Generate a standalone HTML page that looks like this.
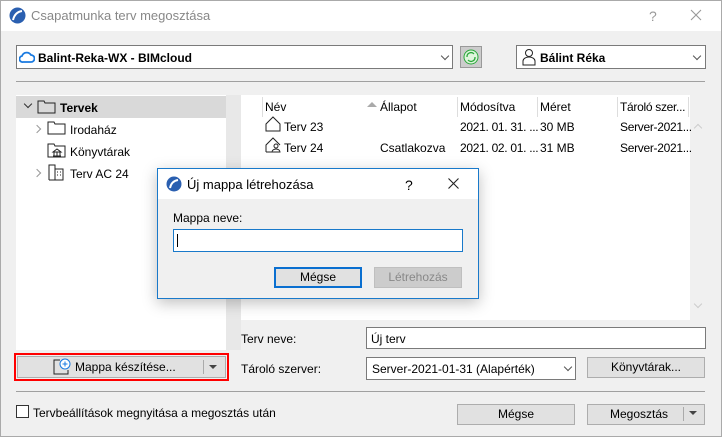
<!DOCTYPE html>
<html><head><meta charset="utf-8"><style>
*{box-sizing:border-box;margin:0;padding:0}
body{width:722px;height:437px;overflow:hidden;font-family:"Liberation Sans",sans-serif;font-size:12px;color:#000;background:#f0f0f0;position:relative}
.a{position:absolute}
.win{left:0;top:0;width:722px;height:437px;border:1px solid #aaa}
.btn{position:absolute;background:#e1e1e1;border:1px solid #adadad;text-align:center;line-height:18px}
.inp{position:absolute;background:#fff;border:1px solid #7a7a7a}
.sep{position:absolute;height:1px;background:#a0a0a0}
.chev{position:absolute;width:6px;height:6px;border-right:1px solid #555;border-bottom:1px solid #555;transform:rotate(45deg)}
.ls{letter-spacing:-0.3px}
</style></head><body>
<div class="a win"></div>
<div class="a" style="left:1px;top:1px;width:720px;height:30px;background:#fff"></div>
<svg class="a" style="left:9px;top:7px" width="17" height="17"><circle cx="8.5" cy="8.5" r="8" fill="#2a5fb0"/><path d="M4 13 Q6 5 13 4" stroke="#fff" stroke-width="2" fill="none"/></svg>
<div class="a" style="left:31px;top:8px;font-size:13px;color:#888">Csapatmunka terv megosztása</div>
<div class="a" style="left:649px;top:8px;font-size:14px;color:#999">?</div>
<svg class="a" style="left:690px;top:9px" width="12" height="12"><path d="M1 1L11 11M11 1L1 11" stroke="#999" stroke-width="1.1"/></svg>

<div class="inp" style="left:16px;top:45px;width:437px;height:24px"></div>
<svg class="a" style="left:19px;top:50px" width="16" height="14"><path d="M4 12 H12 A3.5 3.5 0 0 0 12 5 A5 5 0 0 0 3 6 A3 3 0 0 0 4 12" stroke="#1a7ae0" stroke-width="1.8" fill="none"/></svg>
<div class="a" style="left:38px;top:51px;font-weight:bold">Balint-Reka-WX - BIMcloud</div>
<div class="chev" style="left:442px;top:53px"></div>
<div class="a" style="left:460px;top:46px;width:22px;height:22px;background:#ccc;border:1px solid #999"></div>
<svg class="a" style="left:463px;top:49px" width="16" height="16"><circle cx="8" cy="8" r="7" fill="#dff5dc" stroke="#2aa83a"/><path d="M4 8 A4 4 0 0 1 11 5 M12 8 A4 4 0 0 1 5 11" stroke="#2aa83a" stroke-width="1.3" fill="none"/></svg>
<div class="inp" style="left:516px;top:45px;width:190px;height:24px"></div>
<svg class="a" style="left:522px;top:48px" width="14" height="18"><circle cx="7" cy="5" r="3.5" stroke="#222" fill="none"/><path d="M1 17 V13 A6 4 0 0 1 13 13 V17 Z" stroke="#222" fill="none"/></svg>
<div class="a" style="left:540px;top:51px;font-weight:bold">Bálint Réka</div>
<div class="chev" style="left:694px;top:53px"></div>
<div class="sep" style="left:16px;top:81px;width:689px"></div>

<div class="a" style="left:16px;top:95px;width:210px;height:255px;background:#fff"></div>
<div class="a" style="left:16px;top:96px;width:210px;height:22px;background:#d9d9d9"></div>
<div class="a" style="left:226px;top:95px;width:15px;height:255px;background:#e8e8e8"></div>
<div class="chev" style="left:25px;top:101px;border-color:#333"></div>
<svg class="a" style="left:37px;top:99px" width="19" height="15"><path d="M1 2 H7 L8 4 H18 V14 H1 Z" stroke="#222" fill="none"/></svg>
<div class="a" style="left:60px;top:101px;font-weight:bold">Tervek</div>
<div class="chev" style="left:34px;top:126px;transform:rotate(-45deg);border-color:#999"></div>
<svg class="a" style="left:47px;top:120px" width="19" height="15"><path d="M1 2 H7 L8 4 H18 V14 H1 Z" stroke="#222" fill="none"/></svg>
<div class="a" style="left:70px;top:123px">Irodaház</div>
<svg class="a" style="left:47px;top:142px" width="19" height="16"><path d="M1 2 H7 L8 4 H18 V15 H1 Z" stroke="#222" fill="none"/><path d="M6 10 L10 7 L14 10 Z M6 14 H14 M7 10 V14 M10 10V14 M13 10V14" stroke="#222" fill="none"/></svg>
<div class="a" style="left:70px;top:145px">Könyvtárak</div>
<div class="chev" style="left:34px;top:170px;transform:rotate(-45deg);border-color:#999"></div>
<svg class="a" style="left:48px;top:163px" width="16" height="18"><path d="M1 17 V2 H7 V17 M7 6 H15 V17 H1 M9 9h1M12 9h1M9 12h1M12 12h1" stroke="#222" fill="none"/></svg>
<div class="a" style="left:70px;top:167px">Terv AC 24</div>

<div class="a" style="left:241px;top:95px;width:449px;height:225px;background:#fff"></div>
<div class="a" style="left:690px;top:95px;width:15px;height:225px;background:#f0f0f0"></div>
<div class="a" style="left:262px;top:97px;width:1px;height:20px;background:#ddd"></div>
<div class="a" style="left:265px;top:100px">Név</div>
<div class="a" style="left:367px;top:102px;width:0;height:0;border:5px solid transparent;border-bottom:5px solid #aaa;border-top:0"></div>
<div class="a" style="left:380px;top:100px">Állapot</div>
<div class="a" style="left:457px;top:97px;width:1px;height:20px;background:#ddd"></div>
<div class="a" style="left:460px;top:100px">Módosítva</div>
<div class="a" style="left:537px;top:97px;width:1px;height:20px;background:#ddd"></div>
<div class="a" style="left:540px;top:100px">Méret</div>
<div class="a" style="left:617px;top:97px;width:1px;height:20px;background:#ddd"></div>
<div class="a ls" style="left:620px;top:100px">Tároló szer...</div>
<div class="a" style="left:688px;top:97px;width:1px;height:20px;background:#ddd"></div>
<svg class="a" style="left:264px;top:115px" width="18" height="17"><path d="M2 16 V9 L9 2 L16 9 V16 Z" stroke="#222" fill="none"/></svg>
<div class="a" style="left:284px;top:120px">Terv 23</div>
<div class="a ls" style="left:460px;top:120px">2021. 01. 31. ...</div>
<div class="a" style="left:540px;top:120px">30 MB</div>
<div class="a ls" style="left:620px;top:120px">Server-2021...</div>
<svg class="a" style="left:264px;top:136px" width="18" height="17"><path d="M2 16 V9 L9 2 L16 9 M9 16 H2" stroke="#222" fill="none"/><circle cx="12" cy="10" r="2" stroke="#222" fill="none"/><path d="M8 16 A4 3 0 0 1 16 16Z" stroke="#222" fill="none"/></svg>
<div class="a" style="left:284px;top:141px">Terv 24</div>
<div class="a" style="left:380px;top:141px">Csatlakozva</div>
<div class="a ls" style="left:460px;top:141px">2021. 02. 01. ...</div>
<div class="a" style="left:540px;top:141px">31 MB</div>
<div class="a ls" style="left:620px;top:141px">Server-2021...</div>
<div class="chev" style="left:695px;top:125px;transform:rotate(-135deg);border-color:#ccc"></div>
<div class="chev" style="left:695px;top:301px;border-color:#ccc"></div>

<div class="a" style="left:241px;top:332px">Terv neve:</div>
<div class="inp" style="left:366px;top:327px;width:340px;height:22px"></div>
<div class="a" style="left:371px;top:332px">Új terv</div>
<div class="a" style="left:241px;top:362px">Tároló szerver:</div>
<div class="inp" style="left:366px;top:357px;width:210px;height:23px"></div>
<div class="a" style="left:372px;top:362px">Server-2021-01-31 (Alapérték)</div>
<div class="chev" style="left:565px;top:364px"></div>
<div class="btn" style="left:587px;top:357px;width:118px;height:21px">Könyvtárak...</div>

<div class="a" style="left:14px;top:353px;width:215px;height:28px;border:2px solid #f00"></div>
<div class="btn" style="left:17px;top:356px;width:209px;height:22px"></div>
<svg class="a" style="left:53px;top:358px" width="18" height="17"><path d="M7 2 H1 V16 H15 V12" stroke="#222" fill="none"/><circle cx="12" cy="6" r="5" fill="#fff" stroke="#1a7ae0"/><path d="M12 3.5V8.5M9.5 6H14.5" stroke="#1a7ae0"/></svg>
<div class="a" style="left:75px;top:360px">Mappa készítése...</div>
<div class="a" style="left:203px;top:360px;width:1px;height:14px;background:#aaa"></div>
<div class="a" style="left:209px;top:365px;border:4px solid transparent;border-top:4px solid #444;border-bottom:0"></div>

<div class="sep" style="left:16px;top:391px;width:689px"></div>
<div class="a" style="left:16px;top:405px;width:13px;height:13px;background:#fff;border:1px solid #333"></div>
<div class="a" style="left:33px;top:406px">Tervbeállítások megnyitása a megosztás után</div>
<div class="btn" style="left:457px;top:404px;width:118px;height:21px">Mégse</div>
<div class="btn" style="left:587px;top:404px;width:118px;height:21px;text-align:left;padding-left:22px">Megosztás</div>
<div class="a" style="left:683px;top:407px;width:1px;height:14px;background:#aaa"></div>
<div class="a" style="left:689px;top:411px;border:4px solid transparent;border-top:4px solid #444;border-bottom:0"></div>

<div class="a" style="left:157px;top:168px;width:322px;height:131px;background:#f0f0f0;border:1px solid #1979ca;box-shadow:0 4px 14px rgba(0,0,0,.25)"></div>
<div class="a" style="left:158px;top:169px;width:320px;height:30px;background:#fff"></div>
<svg class="a" style="left:166px;top:176px" width="16" height="16"><circle cx="8" cy="8" r="7.5" fill="#2a5fb0"/><path d="M4 12 Q5.5 5 12 4" stroke="#fff" stroke-width="2" fill="none"/></svg>
<div class="a" style="left:187px;top:177px;font-size:13px">Új mappa létrehozása</div>
<div class="a" style="left:405px;top:177px;font-size:14px">?</div>
<svg class="a" style="left:448px;top:178px" width="11" height="11"><path d="M0.5 0.5L10.5 10.5M10.5 0.5L0.5 10.5" stroke="#222" stroke-width="1.1"/></svg>
<div class="a" style="left:173px;top:211px">Mappa neve:</div>
<div class="a" style="left:173px;top:229px;width:290px;height:23px;background:#fff;border:1px solid #1979ca"></div>
<div class="a" style="left:177px;top:234px;width:1px;height:13px;background:#000"></div>
<div class="btn" style="left:274px;top:267px;width:88px;height:21px;border:2px solid #0a6fd0;line-height:17px">Mégse</div>
<div class="btn" style="left:374px;top:267px;width:88px;height:21px;background:#ccc;border-color:#bfbfbf;color:#888">Létrehozás</div>
</body></html>
